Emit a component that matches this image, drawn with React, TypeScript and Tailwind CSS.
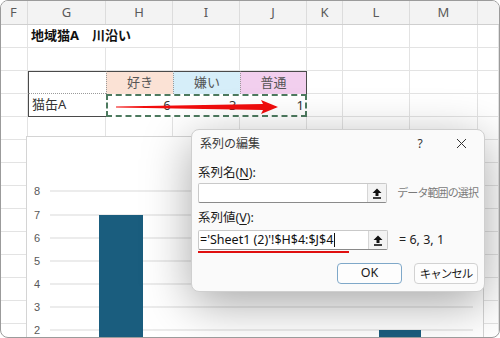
import React from "react";

const font = { fontFamily: "'Noto Sans', 'Noto Sans CJK JP', sans-serif" };
const cols = "grid grid-cols-[27px_78px_67px_67px_67px_36px_67px_68px_1fr]";
const cell = "border-r border-b border-[#e3e3e3] h-[23px]";

function UploadIcon() {
  return (
    <svg width="10" height="11" viewBox="0 0 10 11">
      <path d="M5 0.5 L9.5 5 L6.5 5 L6.5 8 L3.5 8 L3.5 5 L0.5 5 Z" fill="#111" />
      <rect x="1" y="9.2" width="8" height="1.6" fill="#111" />
    </svg>
  );
}

function RangeInput({ children, width }: { children?: React.ReactNode; width: string }) {
  return (
    <div className={`flex h-[20px] ${width} border border-[#c9c9c9] border-b-[#8a8a8a] bg-white rounded-[2px]`}>
      <div className="flex-1 flex items-center pl-[1px] text-[12.5px] text-[#111] overflow-hidden whitespace-nowrap">
        {children}
      </div>
      <div className="w-[19px] flex items-center justify-center bg-[#f3f3f3] border-l border-[#d6d6d6]">
        <UploadIcon />
      </div>
    </div>
  );
}

export default function App() {
  const headers = ["F", "G", "H", "I", "J", "K", "L", "M", ""];
  const gridY = [54, 78, 101, 124, 147, 170, 193];
  const labels = ["8", "7", "6", "5", "4", "3", "2"];
  return (
    <div
      className="relative w-[500px] h-[338px] overflow-hidden rounded-[8px] border border-[#9b9b9b] bg-white"
      style={font}
    >
      {/* column header */}
      <div className={`${cols} bg-[#f3f3f3] border-b border-[#cfcfcf]`}>
        {headers.map((h, i) => (
          <div
            key={i}
            className={`h-[23px] flex items-center ${i === 0 ? "pl-[9px]" : "justify-center"} text-[13px] text-[#5a5a5a] ${i < 8 ? "border-r border-[#dcdcdc]" : ""}`}
          >
            {h}
          </div>
        ))}
      </div>

      {/* row 1 */}
      <div className={cols}>
        <div className={cell} />
        <div className={`${cell} col-span-2 flex items-center pl-[3px] font-bold text-[13px] text-[#111] whitespace-nowrap`}>
          地域猫A　川沿い
        </div>
        {[0, 1, 2, 3, 4, 5].map((i) => (
          <div key={i} className={cell} />
        ))}
      </div>

      {/* row 2 */}
      <div className={cols}>
        {[0, 1, 2, 3, 4, 5, 6, 7, 8].map((i) => (
          <div key={i} className={cell} />
        ))}
      </div>

      {/* row 3 */}
      <div className={cols}>
        <div className={cell} />
        <div className="h-[23px] border-t border-l border-[#4a4a4a] border-b border-b-[#9a9a9a]" style={{ borderTopStyle: "solid", borderLeftStyle: "solid", borderBottomStyle: "dotted" }} />
        <div className="h-[23px] flex items-center justify-center bg-[#fbe2d5] border-t border-[#4a4a4a] border-l border-l-[#9a9a9a] text-[13px] text-[#555]" style={{ borderLeftStyle: "dotted" }}>
          好き
        </div>
        <div className="h-[23px] flex items-center justify-center bg-[#d6eef9] border-t border-[#4a4a4a] border-l border-l-[#9a9a9a] text-[13px] text-[#555]" style={{ borderLeftStyle: "dotted" }}>
          嫌い
        </div>
        <div className="h-[23px] flex items-center justify-center bg-[#f2cfee] border-t border-r border-[#4a4a4a] border-l border-l-[#9a9a9a] text-[13px] text-[#555]" style={{ borderLeftStyle: "dotted" }}>
          普通
        </div>
        <div className={cell} />
        <div className={cell} />
        <div className={cell} />
        <div className={cell} />
      </div>

      {/* row 4 */}
      <div className={cols}>
        <div className={cell} />
        <div className="h-[23px] border-l border-b border-[#4a4a4a] flex items-center pl-[3px] text-[13px] text-[#333]">
          猫缶A
        </div>
        <div className="col-span-3 h-[23px] grid grid-cols-3 border-2 border-dashed border-[#4d7a5f] text-[13px] text-[#333]">
          <div className="flex items-center justify-end pr-[3px]">6</div>
          <div className="flex items-center justify-end pr-[3px]">3</div>
          <div className="flex items-center justify-end pr-[1px]">1</div>
        </div>
        <div className={cell} />
        <div className={cell} />
        <div className={cell} />
        <div className={cell} />
      </div>

      {/* remaining rows */}
      {[0, 1, 2, 3, 4, 5, 6, 7, 8, 9].map((r) => (
        <div key={r} className={cols}>
          {[0, 1, 2, 3, 4, 5, 6, 7, 8].map((i) => (
            <div key={i} className={cell} />
          ))}
        </div>
      ))}

      {/* red arrow */}
      <svg className="absolute left-[110px] top-[96px]" width="172" height="20" viewBox="0 0 172 20">
        <polygon points="5,9.4 152,7 150,3 167,10 150,17 152,13 5,10.6" fill="#f20d0d" />
      </svg>

      {/* chart */}
      <div className="absolute left-[25px] top-[135px] w-[458px] h-[220px] bg-white border border-[#d4d4d4]">
        <svg width="458" height="220" className="block">
          {gridY.map((y, i) => (
            <g key={i}>
              <line x1="23" x2="446" y1={y} y2={y} stroke="#d9d9d9" strokeWidth="1" />
              <text x="10" y={y + 4} fontSize="11" fill="#595959" textAnchor="middle" fontFamily="'Liberation Sans', sans-serif">
                {labels[i]}
              </text>
            </g>
          ))}
          <rect x="72" y="78" width="44" height="150" fill="#1a5d7e" />
          <rect x="352" y="193" width="42" height="40" fill="#1a5d7e" />
        </svg>
      </div>

      {/* dialog */}
      <div className="absolute left-[190px] top-[128px] w-[294px] h-[163px] rounded-[8px] bg-[#fafafa] border border-[#cfcfcf] shadow-[0_12px_48px_rgba(0,0,0,0.35)] px-[6px] flex flex-col">
        <div className="h-[27px] flex items-center pl-[2px] text-[12px] text-[#3a3a3a]">
          <span className="flex-1">系列の編集</span>
          <span className="w-[12px] text-center mr-[30px] text-[12px] text-[#333]">?</span>
          <svg width="11" height="11" viewBox="0 0 11 11" className="mr-[11px]">
            <path d="M1 1 L10 10 M10 1 L1 10" stroke="#333" strokeWidth="1" />
          </svg>
        </div>
        <div className="mt-[8px] h-[16px] flex items-center text-[12.5px] text-[#1a1a1a] leading-none">
          系列名(<span className="underline underline-offset-2">N</span>):
        </div>
        <div className="mt-[2px] flex items-center">
          <RangeInput width="w-[190px]" />
          <span className="ml-[10px] text-[11px] tracking-[-0.9px] text-[#7a7a7a] whitespace-nowrap">データ範囲の選択</span>
        </div>
        <div className="mt-[7px] h-[16px] flex items-center text-[12.5px] text-[#1a1a1a] leading-none">
          系列値(<span className="underline underline-offset-2">V</span>):
        </div>
        <div className="mt-[4px] flex items-center">
          <RangeInput width="w-[190px]">
            <span>='Sheet1 (2)'!$H$4:$J$4</span>
            <span className="inline-block w-[1px] h-[14px] bg-[#111] ml-[1px]" />
          </RangeInput>
          <span className="ml-[11px] text-[12.5px] text-[#222] whitespace-nowrap">= 6, 3, 1</span>
        </div>
        <div className="mt-[1px] h-[2px] w-[151px] bg-[#e01010]" />
        <div className="mt-[10px] flex">
          <div className="ml-[139px] w-[65px] h-[21px] flex items-center justify-center rounded-[4px] border border-[#7fa8c9] bg-[#fdfdfd] text-[12.5px] text-[#1a1a1a]">
            OK
          </div>
          <div className="ml-[12px] w-[64px] h-[21px] flex items-center justify-center rounded-[4px] border border-[#d2d2d2] bg-[#fdfdfd] text-[11.5px] tracking-[-1px] text-[#1a1a1a] whitespace-nowrap">
            キャンセル
          </div>
        </div>
      </div>
    </div>
  );
}
